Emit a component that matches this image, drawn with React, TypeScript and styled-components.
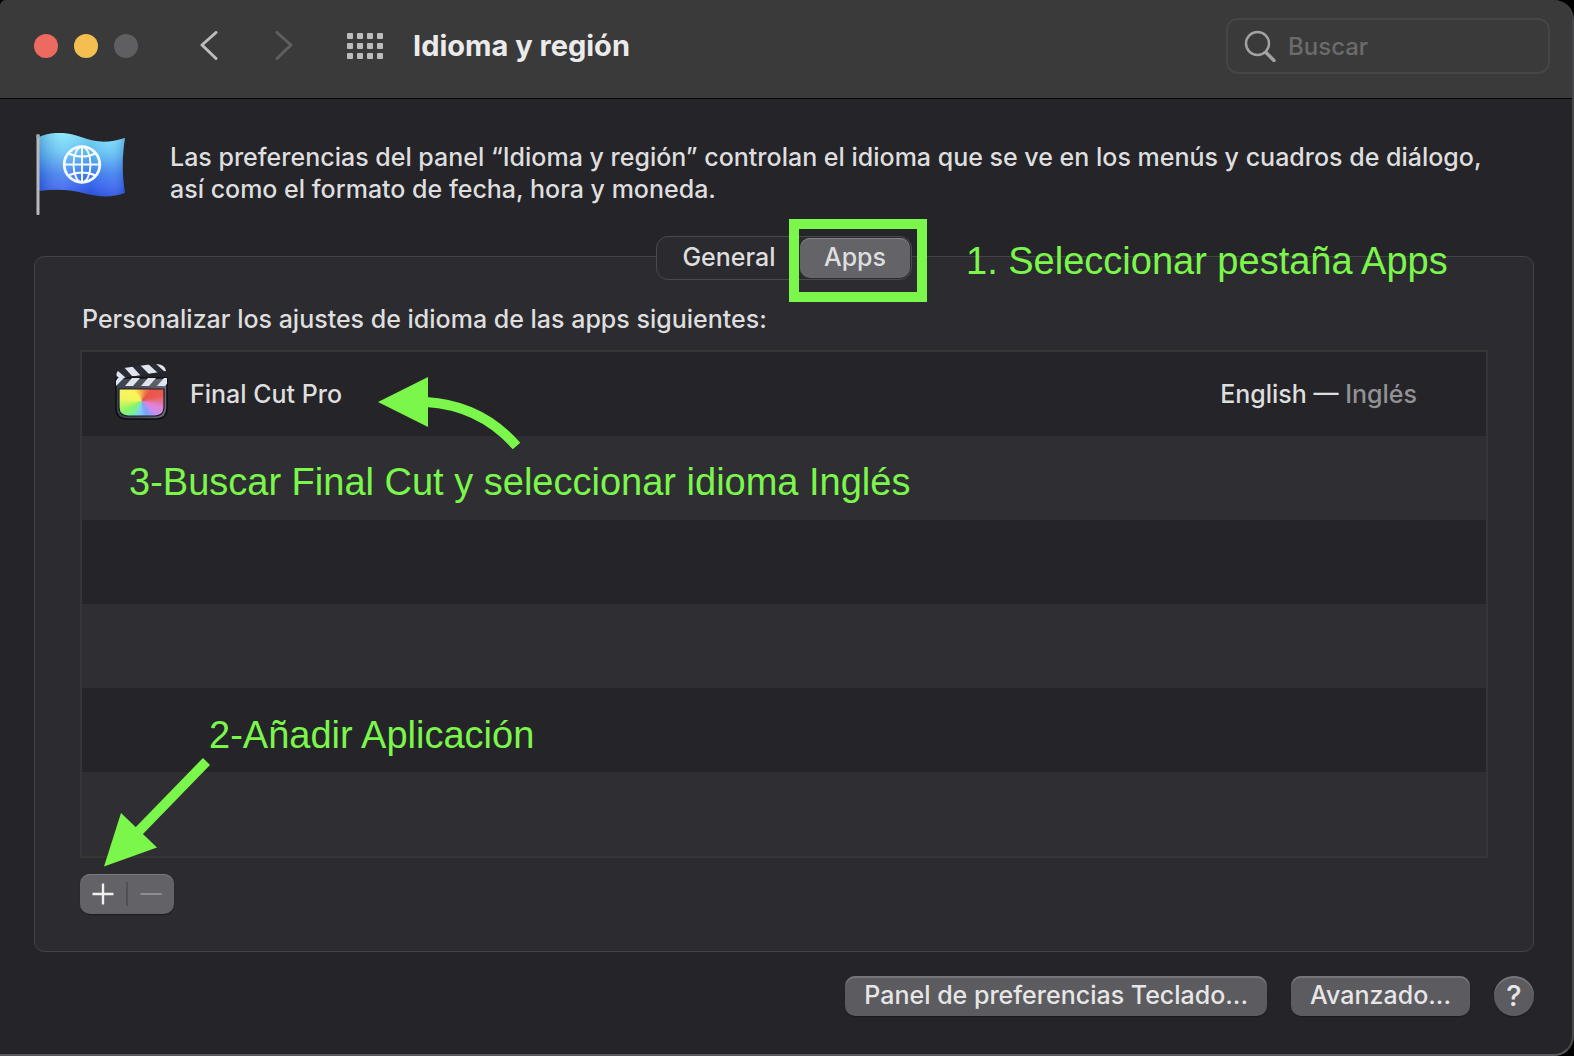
import React, { useState } from "react";
import styled, { createGlobalStyle } from "styled-components";

const sans = `Inter, "Noto Sans", "Liberation Sans", sans-serif`;
const marker = "#7bf64b";

const GlobalStyle = createGlobalStyle`
  *, *::before, *::after { box-sizing: border-box; }
  body { margin: 0; background: #000; }
  button, input { font: inherit; color: inherit; margin: 0; padding: 0; border: 0; background: none; }
  svg { display: block; }
`;

const Window = styled.main`
  display: flex;
  flex-direction: column;
  min-height: 100vh;
  overflow: hidden;
  background: #252429;
  border-right: 2px solid #48484b;
  border-bottom: 2px solid #59595c;
  border-radius: 6px 20px 20px 0;
  color: #dedede;
  font-family: ${sans};
  font-size: 25px;
  font-weight: 500;
  line-height: 32px;
`;

const Toolbar = styled.header`
  display: flex;
  align-items: center;
  height: 99px;
  padding: 0 22px 7px 34px;
  background: #3a3a3b;
  border-bottom: 1px solid #000;
`;

const Lights = styled.div`
  display: flex;
  gap: 16px;
`;

const Light = styled.button<{ $color: string }>`
  width: 24px;
  height: 24px;
  border-radius: 50%;
  background: ${(p) => p.$color};
`;

const ToolButton = styled.button<{ $gap: number; $color: string }>`
  margin-left: ${(p) => p.$gap}px;
  color: ${(p) => p.$color};
`;

const Title = styled.h1`
  flex: 1;
  margin: 0 0 0 30px;
  font-size: 29px;
  font-weight: 700;
  color: #ebebeb;
`;

const Search = styled.label`
  display: flex;
  align-items: center;
  gap: 12px;
  width: 324px;
  height: 56px;
  padding: 0 16px;
  border: 2px solid #464647;
  border-radius: 12px;
  color: #a3a3a4;
`;

const SearchInput = styled.input`
  flex: 1;
  min-width: 0;
  padding-top: 2px;
  outline: none;
  font-size: 24px;
  &::placeholder { color: #6b6b6c; opacity: 1; }
`;

const Content = styled.div`
  flex: 1;
  padding: 34px 38px 38px 34px;
`;

const Intro = styled.div`
  display: flex;
  gap: 44px;
`;

const IntroText = styled.p`
  margin: 0;
  padding-top: 8px;
`;

const Tabs = styled.div`
  position: relative;
  z-index: 1;
  display: flex;
  width: 256px;
  height: 44px;
  margin: 19px auto -24px;
  padding: 1px;
  background: #2b2a2f;
  border: 1px solid #49494c;
  border-radius: 12px;
`;

const Tab = styled.button<{ $active: boolean }>`
  flex: ${(p) => (p.$active ? "0 0 110px" : "1")};
  border-radius: 10px;
  padding-bottom: 2px;
  background: ${(p) => (p.$active ? "#646368" : "transparent")};
  box-shadow: ${(p) => (p.$active ? "inset 0 1px #838287" : "none")};
`;

const TabHighlight = styled.span`
  position: absolute;
  top: -18px;
  right: -16px;
  width: 138px;
  height: 83px;
  border: 10px solid ${marker};
  pointer-events: none;
`;

const Panel = styled.section`
  position: relative;
  padding: 46px 45px 37px;
  background: #2c2b30;
  border: 1px solid #434246;
  border-radius: 10px;
`;

const PanelLabel = styled.h2`
  margin: 0 2px 15px;
  font-size: 25px;
  font-weight: 500;
`;

const AppTable = styled.table`
  display: block;
  border: 2px solid #363637;
  tbody { display: block; }
`;

const AppRow = styled.tr`
  display: flex;
  align-items: center;
  justify-content: space-between;
  height: 84px;
  padding: 0 68px 0 33px;
  background: #252429;
  &:nth-child(even) { background: #2f2e33; }
`;

const AppCell = styled.td`
  display: flex;
  align-items: center;
  gap: 19px;
  padding: 0;
`;

const Muted = styled.span`
  color: #929294;
`;

const ListButtons = styled.div`
  display: flex;
  align-items: center;
  width: 94px;
  height: 40px;
  margin-top: 16px;
  padding-bottom: 1px;
  border-radius: 10px;
  background: #636267;
  box-shadow: inset 0 1px #7b7a7f, 0 1px 1px #1c1b20;
`;

const ListButton = styled.button`
  flex: 1;
  display: flex;
  align-items: center;
  justify-content: center;
  height: 24px;
  color: #f0f0f0;
  &:disabled { color: #8f8e92; }
  & + & { border-left: 2px solid #515055; }
`;

const Footer = styled.footer`
  display: flex;
  justify-content: flex-end;
  gap: 24px;
  margin-top: 24px;
`;

const PushButton = styled.button<{ $round?: boolean }>`
  height: 40px;
  width: ${(p) => (p.$round ? "40px" : "auto")};
  padding: ${(p) => (p.$round ? "0" : "0 19px 2px")};
  border-radius: ${(p) => (p.$round ? "50%" : "10px")};
  font-size: ${(p) => (p.$round ? 29 : 25)}px;
  color: #e6e6e6;
  background: #5c5b60;
  box-shadow: inset 0 2px #757479, 0 1px 1px #1b1a1f;
`;

const Note = styled.span<{ $x: number; $y: number }>`
  position: absolute;
  left: ${(p) => p.$x}px;
  top: ${(p) => p.$y}px;
  z-index: 2;
  white-space: nowrap;
  font-family: "Liberation Sans", Arial, sans-serif;
  font-size: 38px;
  font-weight: 400;
  line-height: 44px;
  color: ${marker};
`;

const Arrow = styled.svg<{ $x: number; $y: number }>`
  position: absolute;
  left: ${(p) => p.$x}px;
  top: ${(p) => p.$y}px;
  pointer-events: none;
`;

const Chevron = ({ flip = false }: { flip?: boolean }) => (
  <svg width="18" height="30" viewBox="0 0 18 30" fill="none" stroke="currentColor" strokeWidth="3" strokeLinecap="round" strokeLinejoin="round">
    <path d={flip ? "M2 1.500 16 14 2 27.500" : "M16 1.500 2 14 16 27.500"} />
  </svg>
);

const GridIcon = () => (
  <svg width="36" height="26" viewBox="0 0 36 26" fill="currentColor">
    {[0, 10, 20].map((y) => [0, 10, 20, 30].map((x) => <rect key={`${x}-${y}`} x={x} y={y} width="6" height="6" rx="1" />))}
  </svg>
);

const SearchIcon = () => (
  <svg width="32" height="32" viewBox="0 0 32 32" fill="none" stroke="currentColor" strokeLinecap="round">
    <circle cx="13.5" cy="13.5" r="11.5" strokeWidth="2.4" />
    <path d="M22 22.500 30 30.500" strokeWidth="3.4" />
  </svg>
);

const FlagIcon = () => (
  <svg width="92" height="84" viewBox="0 0 92 84">
    <defs>
      <linearGradient id="cloth" x1="0" y1="0" x2="0" y2="1">
        <stop offset="0" stopColor="#86e8fb" />
        <stop offset="0.3" stopColor="#66c6f5" />
        <stop offset="0.65" stopColor="#4180f0" />
        <stop offset="0.85" stopColor="#3c66f1" />
        <stop offset="1" stopColor="#2a52d8" />
      </linearGradient>
      <linearGradient id="folds" x1="0" y1="0" x2="1" y2="0">
        <stop offset="0" stopColor="#06339a" stopOpacity="0.3" />
        <stop offset="0.3" stopColor="#fff" stopOpacity="0.1" />
        <stop offset="0.6" stopColor="#0a2fa0" stopOpacity="0.1" />
        <stop offset="0.82" stopColor="#fff" stopOpacity="0.06" />
        <stop offset="1" stopColor="#06339a" stopOpacity="0.25" />
      </linearGradient>
    </defs>
    {["url(#cloth)", "url(#folds)"].map((f) => (
      <path key={f} fill={f} d="M5 4C17-1 30-2 47 4 63 10 75 10 91 5 88 23 88 43 91 60 77 65 65 64 49 60 34 56 20 56 5 58Z" />
    ))}
    <rect x="2.500" y="3" width="3" height="79" rx="1" fill="#b9b9bb" />
    <circle cx="4" cy="3" r="2" fill="#a5a5a7" />
    <g fill="none" stroke="#f3faff" strokeWidth="2">
      <circle cx="48" cy="31.500" r="17.800" strokeWidth="2.800" />
      <ellipse cx="48" cy="31.500" rx="8.500" ry="17.800" />
      <path d="M48 14v35M30 31.500h36M34.500 20.500c8 4 19 4 27 0M34.500 42.500c8-4 19-4 27 0" />
    </g>
  </svg>
);

const wheelStops: [number, number[]][] = [
  [0, [246, 160, 80]],
  [40, [233, 84, 72]],
  [75, [234, 92, 80]],
  [105, [226, 130, 210]],
  [130, [205, 140, 238]],
  [160, [120, 165, 248]],
  [190, [130, 205, 245]],
  [215, [120, 240, 160]],
  [240, [135, 245, 100]],
  [275, [240, 245, 95]],
  [320, [255, 244, 90]],
  [360, [246, 160, 80]],
];

const wheelColor = (angle: number) => {
  const i = wheelStops.findIndex(([a]) => a > angle);
  const [a0, c0] = wheelStops[i - 1];
  const [a1, c1] = wheelStops[i];
  const t = (angle - a0) / (a1 - a0);
  return `rgb(${c0.map((c, k) => Math.round(c + (c1[k] - c) * t)).join(",")})`;
};

const wheelPoint = (deg: number) => {
  const r = (deg * Math.PI) / 180;
  return `${27 + 45 * Math.sin(r)} ${38 - 45 * Math.cos(r)}`;
};

const FinalCutIcon = () => (
  <svg width="56" height="62" viewBox="0 0 56 62">
    <defs>
      <clipPath id="screen"><path d="M4 26H49V44Q49 53 40 53H13Q4 53 4 44Z" /></clipPath>
      <clipPath id="armTop"><path d="M1 14Q1 6 9 5L38 1Q50 0 51 8L2 16Z" /></clipPath>
      <clipPath id="armBase"><path d="M1 15H52V23H1Z" /></clipPath>
      <linearGradient id="slate" x1="0" y1="0" x2="1" y2="0">
        <stop offset="0" stopColor="#39404d" />
        <stop offset="0.5" stopColor="#4d4f58" />
        <stop offset="1" stopColor="#6c6b75" />
      </linearGradient>
    </defs>
    <path d="M1 15H52V45Q52 56 41 56H12Q1 56 1 45Z" fill="url(#slate)" stroke="#0d0e14" strokeWidth="1.500" />
    <g clipPath="url(#screen)">
      {Array.from({ length: 72 }, (_, i) => (
        <path key={i} d={`M27 38L${wheelPoint(i * 5)}L${wheelPoint(Math.min(i * 5 + 12, 361))}Z`} fill={wheelColor(i * 5 + 2)} />
      ))}
    </g>
    <path d="M4 26H49V44Q49 53 40 53H13Q4 53 4 44Z" fill="none" stroke="#1b1c28" strokeWidth="1.200" />
    <g clipPath="url(#armTop)">
      <path d="M0 0H54V18H0Z" fill="#292c34" />
      <path d="M-3 8H3L11 15H4ZM8 3 16 2 26 13H17ZM24 1 32 0 43 10 34 11ZM40 0 48 0 56 8 50 9Z" fill="#dfe4ee" />
    </g>
    <g clipPath="url(#armBase)" fill="#dfe4ee">
      <path d="M-3 23 3 15H9L1 23ZM10 23 17 15H25L18 23ZM26 23 33 15H41L34 23ZM42 23 49 15H57L50 23Z" />
    </g>
  </svg>
);

const emptyRows = [1, 2, 3, 4, 5];

export default function App() {
  const [query, setQuery] = useState("");
  return (
    <>
      <GlobalStyle />
      <Window>
        <Toolbar>
          <Lights>
            <Light $color="#ec6a5f" aria-label="Cerrar" />
            <Light $color="#f4bf50" aria-label="Minimizar" />
            <Light $color="#5f5f61" aria-label="Ampliar" />
          </Lights>
          <ToolButton $gap={62} $color="#bcbcbd" aria-label="Atrás"><Chevron /></ToolButton>
          <ToolButton $gap={57} $color="#5f5f60" aria-label="Adelante"><Chevron flip /></ToolButton>
          <ToolButton $gap={54} $color="#bcbcbd" aria-label="Mostrar todo"><GridIcon /></ToolButton>
          <Title>Idioma y región</Title>
          <Search>
            <SearchIcon />
            <SearchInput aria-label="Buscar" placeholder="Buscar" value={query} onChange={(e) => setQuery(e.target.value)} />
          </Search>
        </Toolbar>
        <Content>
          <Intro>
            <FlagIcon />
            <IntroText>
              Las preferencias del panel “Idioma y región” controlan el idioma que se ve en los menús y cuadros de diálogo,
              <br />
              así como el formato de fecha, hora y moneda.
            </IntroText>
          </Intro>
          <Tabs role="tablist">
            <Tab $active={false} role="tab" aria-selected={false}>General</Tab>
            <Tab $active role="tab" aria-selected>Apps</Tab>
            <TabHighlight />
          </Tabs>
          <Panel>
            <PanelLabel id="apps-label">Personalizar los ajustes de idioma de las apps siguientes:</PanelLabel>
            <AppTable aria-labelledby="apps-label">
              <tbody>
                <AppRow>
                  <AppCell><FinalCutIcon />Final Cut Pro</AppCell>
                  <td>English — <Muted>Inglés</Muted></td>
                </AppRow>
                {emptyRows.map((row) => (
                  <AppRow key={row}><td /></AppRow>
                ))}
              </tbody>
            </AppTable>
            <ListButtons>
              <ListButton aria-label="Añadir">
                <svg width="22" height="22" viewBox="0 0 22 22" stroke="currentColor" strokeWidth="2.400"><path d="M11 .5v21M.5 11h21" /></svg>
              </ListButton>
              <ListButton aria-label="Eliminar" disabled>
                <svg width="22" height="22" viewBox="0 0 22 22" stroke="currentColor" strokeWidth="2"><path d="M.5 11h21" /></svg>
              </ListButton>
            </ListButtons>
            <Note $x={931} $y={-18}>1. Seleccionar pestaña Apps</Note>
            <Note $x={94} $y={203}>3-Buscar Final Cut y seleccionar idioma Inglés</Note>
            <Note $x={174} $y={456}>2-Añadir Aplicación</Note>
            <Arrow $x={343} $y={119} width="144" height="76" viewBox="0 0 144 76">
              <path d="M0 26 50 1V51Z" fill={marker} />
              <path d="M48 26C82 28 114 42 138.500 70" fill="none" stroke={marker} strokeWidth="10" />
            </Arrow>
            <Arrow $x={69} $y={500} width="106" height="112" viewBox="0 0 106 112">
              <path d="M0 109.500 17 56 53 90.500Z" fill={marker} />
              <path d="M32 77 102.500 4.500" stroke={marker} strokeWidth="10" />
            </Arrow>
          </Panel>
          <Footer>
            <PushButton>Panel de preferencias Teclado...</PushButton>
            <PushButton>Avanzado...</PushButton>
            <PushButton $round aria-label="Ayuda">?</PushButton>
          </Footer>
        </Content>
      </Window>
    </>
  );
}
